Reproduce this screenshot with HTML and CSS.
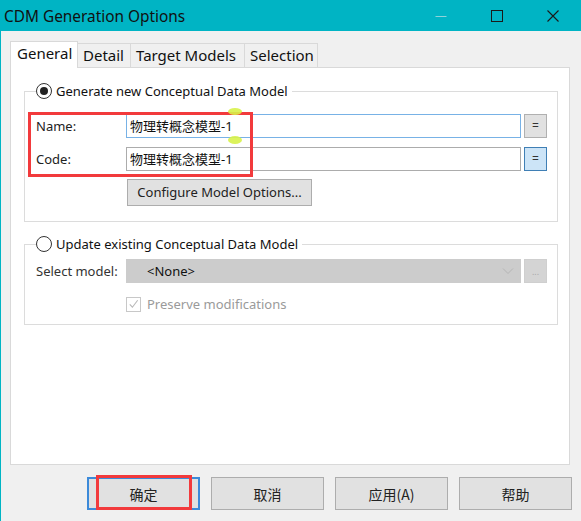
FILE: index.html
```html
<!DOCTYPE html>
<html>
<head>
<meta charset="utf-8">
<link rel="stylesheet" href="styles.css">
</head>
<body>
<div class="window">
  <div class="titlebar">
    <span class="title">CDM Generation Options</span>
    <div class="controls">
      <span class="ctl"><svg width="12" height="12" viewBox="0 0 12 12"><path d="M0.5 6.5H11.5" stroke="#8fd3da" stroke-width="1"/></svg></span>
      <span class="ctl"><svg width="12" height="12" viewBox="0 0 12 12"><rect x="0.5" y="0.5" width="11" height="11" fill="none" stroke="#1a1a1a" stroke-width="1"/></svg></span>
      <span class="ctl"><svg width="12" height="12" viewBox="0 0 12 12"><path d="M0.5 0.5L11.5 11.5M11.5 0.5L0.5 11.5" stroke="#1a1a1a" stroke-width="1.1"/></svg></span>
    </div>
  </div>
  <div class="client">
    <div class="tabs">
      <div class="tab active">General</div>
      <div class="tab">Detail</div>
      <div class="tab">Target Models</div>
      <div class="tab">Selection</div>
    </div>
    <div class="panel">
      <fieldset class="group g1">
        <legend><span class="radio checked"></span>Generate new Conceptual Data Model</legend>
        <div class="row">
          <span class="lbl">Name:</span>
          <div class="input focused">物理转概念模型-1</div>
          <span class="eq">=</span>
        </div>
        <div class="row r2">
          <span class="lbl">Code:</span>
          <div class="input">物理转概念模型-1</div>
          <span class="eq active">=</span>
        </div>
        <div class="row r3">
          <span class="lbl"></span>
          <span class="btn cfg">Configure Model Options...</span>
        </div>
      </fieldset>
      <fieldset class="group g2">
        <legend><span class="radio"></span>Update existing Conceptual Data Model</legend>
        <div class="row">
          <span class="lbl dim">Select model:</span>
          <div class="combo"><span>&lt;None&gt;</span><svg width="12" height="8" viewBox="0 0 12 8"><path d="M1 1.5L6 6.5L11 1.5" fill="none" stroke="#b5b5b5" stroke-width="1"/></svg></div>
          <span class="dots">...</span>
        </div>
        <div class="row r4">
          <span class="lbl"></span>
          <span class="check"><svg width="14" height="14" viewBox="0 0 14 14"><path d="M3 7.5L5.8 10.5L11.5 3" fill="none" stroke="#b8b8b8" stroke-width="1.2"/></svg></span>
          <span class="dimtext">Preserve modifications</span>
        </div>
      </fieldset>
    </div>
    <div class="buttons">
      <span class="btn dlg default">确定</span>
      <span class="btn dlg">取消</span>
      <span class="btn dlg">应用(A)</span>
      <span class="btn dlg">帮助</span>
    </div>
  </div>
  <div class="redbox box1"></div>
  <div class="redbox box2"></div>
  <div class="marker m1"></div>
  <div class="marker m2"></div>
</div>
</body>
</html>
```

FILE: styles.css
```css
* { box-sizing: border-box; }
html, body { margin: 0; padding: 0; }
body {
  width: 581px;
  height: 521px;
  overflow: hidden;
  font-family: "Noto Sans", "Noto Sans CJK SC", sans-serif;
  background: #f0f0f0;
}
.window {
  position: relative;
  width: 581px;
  height: 521px;
  border-left: 1px solid #00b4c4;
  background: #f0f0f0;
  display: flex;
  flex-direction: column;
}
.titlebar {
  height: 31px;
  background: #00b4c4;
  display: flex;
  align-items: center;
  padding-left: 3px;
}
.title {
  font-family: "Noto Sans", sans-serif;
  font-size: 15.4px;
  color: #111;
  flex: 1;
  line-height: 1;
  padding-top: 2px;
}
.controls { display: flex; align-items: center; height: 100%; }
.ctl {
  width: 56px;
  display: flex;
  justify-content: center;
  align-items: center;
  height: 100%;
  padding-top: 1px;
}
.client {
  flex: 1;
  display: flex;
  flex-direction: column;
  padding: 10px 11px 0 9px;
}
.tabs {
  display: flex;
  align-items: flex-end;
  height: 26px;
  font-size: 15px;
  color: #111;
}
.tab {
  height: 24px;
  border: 1px solid #d9d9d9;
  border-bottom: none;
  border-left: none;
  background: #f0f0f0;
  padding: 0 5px 0 5px;
  display: flex;
  align-items: center;
  line-height: 1;
  white-space: nowrap;
}
.tab.active {
  height: 27px;
  background: #fff;
  border-left: 1px solid #d9d9d9;
  margin-bottom: -1px;
  position: relative;
  z-index: 1;
  width: 68px;
  padding: 0 0 3px 6px;
}
.tab:nth-child(2) { width: 53px; }
.tab:nth-child(3) { width: 114px; }
.tab:nth-child(4) { width: 73px; }
.panel {
  height: 398px;
  background: #fff;
  border: 1px solid #d9d9d9;
  padding: 14px 11px 0 13px;
}
.group {
  margin: 0;
  border: 1px solid #dcdcdc;
  padding: 0 9px 0 11px;
  min-width: 0;
}
.group legend {
  padding: 0 4px 0 0;
  margin-left: 0;
  font-size: 13px;
  color: #111;
  display: flex;
  align-items: center;
  height: 18px;
  line-height: 1;
}
.radio {
  width: 16px;
  height: 16px;
  border: 1px solid #333;
  border-radius: 50%;
  margin-right: 4px;
  display: inline-flex;
  justify-content: center;
  align-items: center;
  background: #fff;
}
.radio.checked::after {
  content: "";
  width: 8px;
  height: 8px;
  border-radius: 50%;
  background: #222;
}
.g1 { height: 140px; padding-top: 14px; }
.g2 { margin-top: 13px; height: 90px; padding-top: 6px; }
.row {
  display: flex;
  align-items: center;
  height: 24px;
}
.r2 { margin-top: 9px; }
.r3 { margin-top: 8px; height: 27px; }
.r4 { margin-top: 13px; height: 16px; }
.lbl {
  width: 90px;
  font-size: 13px;
  color: #222;
  flex: none;
}
.lbl.dim { color: #333; }
.input {
  width: 395px;
  height: 24px;
  border: 1px solid #acacac;
  background: #fff;
  font-size: 13px;
  padding: 0 0 0 3px;
  display: flex;
  align-items: center;
  color: #111;
  line-height: 1;
}
.input.focused { border-color: #78b2e6; }
.eq {
  margin-left: 3px;
  width: 23px;
  height: 24px;
  border: 1px solid #b0b0b0;
  background: #e1e1e1;
  font-size: 12px;
  color: #333;
  display: flex;
  align-items: center;
  justify-content: center;
  line-height: 1;
}
.eq.active { background: #cce4f7; border-color: #3f7fb5; }
.btn {
  display: flex;
  align-items: center;
  justify-content: center;
  background: #e1e1e1;
  border: 1px solid #adadad;
  color: #222;
  line-height: 1;
}
.cfg {
  width: 185px;
  height: 27px;
  font-size: 13px;
  margin-left: 1px;
}
.combo {
  width: 395px;
  height: 24px;
  background: #cccccc;
  display: flex;
  align-items: center;
  justify-content: space-between;
  padding: 0 7px 0 21px;
  font-size: 13px;
  color: #111;
}
.dots {
  margin-left: 3px;
  width: 23px;
  height: 24px;
  background: #d4d4d4;
  border: 1px solid #cfcfcf;
  font-size: 9px;
  color: #aaa;
  display: flex;
  align-items: flex-end;
  justify-content: center;
  padding-bottom: 6px;
  line-height: 1;
}
.check {
  width: 15px;
  height: 15px;
  border: 1px solid #c8c8c8;
  background: #fff;
  display: flex;
  align-items: center;
  justify-content: center;
  margin-right: 6px;
}
.dimtext { font-size: 13px; color: #9a9a9a; }
.buttons {
  display: flex;
  justify-content: flex-end;
  gap: 11px;
  margin-top: 12px;
  margin-right: -2px;
}
.dlg {
  width: 113px;
  height: 33px;
  font-size: 14px;
  font-family: "Noto Sans CJK SC", "Noto Sans", sans-serif;
}
.dlg.default {
  border: 2px solid #3c8ad9;
}
.redbox {
  position: absolute;
  border: 3px solid #f23a3c;
}
.box1 { left: 27px; top: 112px; width: 225px; height: 65px; }
.box2 { left: 95px; top: 475px; width: 96px; height: 35px; }
.marker {
  position: absolute;
  width: 14px;
  height: 7px;
  border-radius: 50%;
  background: #d8f24a;
  opacity: 0.9;
}
.m1 { left: 227px; top: 108px; }
.m2 { left: 227px; top: 136px; height: 8px; }
```
